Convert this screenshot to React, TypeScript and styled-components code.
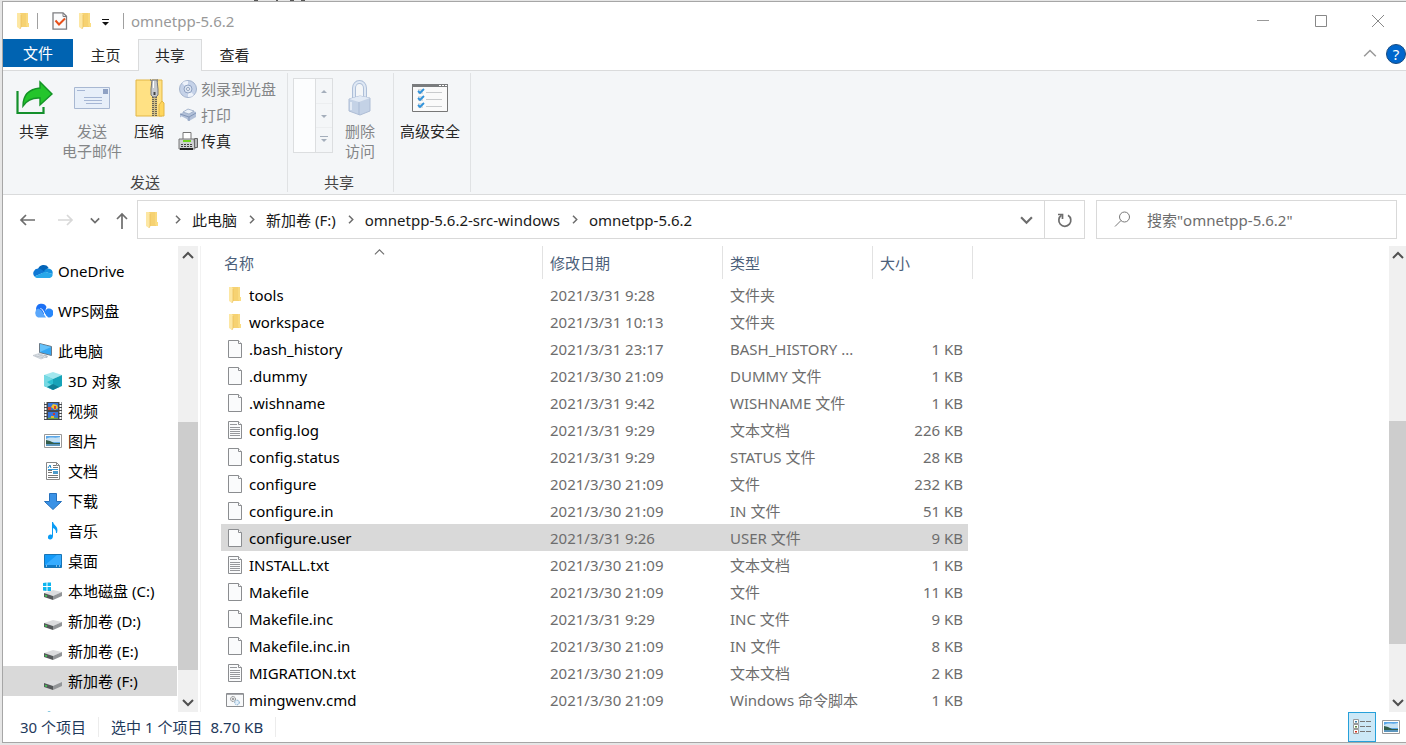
import React from "react";
import styled, { createGlobalStyle } from "styled-components";

const GlobalStyle = createGlobalStyle`
  *, *::before, *::after { box-sizing: border-box; }
  body {
    margin: 0;
    background: #e6e6e6;
    color: #000;
    font-family: "Noto Sans", "Noto Sans CJK SC", sans-serif;
    font-size: 15px;
    line-height: 20px;
    overflow: hidden;
  }
  button, input {
    font: inherit;
    color: inherit;
    border: 0;
    padding: 0;
    margin: 0;
    background: none;
  }
  svg { display: block; flex: none; }
`;

/* ---------- window frame ---------- */

const Desktop = styled.div`
  height: 100vh;
  display: flex;
  flex-direction: column;
  padding: 0 0 2px 2px;
`;

const Window = styled.div`
  flex: 1;
  min-height: 0;
  display: flex;
  flex-direction: column;
  background: #fff;
  border: 1px solid #a6a6a6;
  border-right: 0;
`;

const TitleBar = styled.header`
  height: 37px;
  flex: none;
  display: flex;
  align-items: center;
  padding-left: 11px;
  color: #999;
`;

const QuickButton = styled.button<{ $gap: number }>`
  margin-right: ${(p) => p.$gap}px;
`;

const TitleDivider = styled.span<{ $gap: number }>`
  width: 1px;
  height: 16px;
  background: #a0a0a0;
  margin-right: ${(p) => p.$gap}px;
`;

const WindowTitle = styled.h1`
  flex: 1;
  margin: 0;
  font-size: 15px;
  font-weight: 400;
`;

const CaptionButton = styled.button`
  width: 58px;
  height: 36px;
  display: grid;
  place-items: center;
  &:last-child { width: 56px; }
`;

const TabBar = styled.nav`
  height: 32px;
  flex: none;
  display: flex;
  align-items: flex-start;
  border-bottom: 1px solid #dadbdc;
`;

const FileTab = styled.button`
  width: 70px;
  height: 28px;
  color: #fff;
  background: #0063b1;
`;

const Tab = styled.button<{ $active?: boolean }>`
  width: ${(p) => (p.$active ? 64 : 65)}px;
  height: 32px;
  padding-bottom: 2px;
  color: #262626;
  border: solid ${(p) => (p.$active ? "#dadbdc" : "transparent")};
  border-width: 1px 1px 0;
  background: ${(p) => (p.$active ? "#f4f6f8" : "transparent")};
`;

const TabTools = styled.div`
  margin-left: auto;
  height: 30px;
  display: flex;
  align-items: center;
  gap: 9px;
`;

const HelpButton = styled.button`
  width: 20px;
  height: 20px;
  border-radius: 50%;
  background: #0066cc;
  border: 1px solid #174a80;
  color: #fff;
  line-height: 18px;
`;

/* ---------- ribbon ---------- */

const Ribbon = styled.section`
  height: 124px;
  flex: none;
  display: flex;
  padding: 2px 0;
  background: #f4f6f8;
  border-bottom: 1px solid #dadbdc;
`;

const RibbonGroup = styled.div<{ $width: number; $pad: number }>`
  width: ${(p) => p.$width}px;
  padding: 5px 0 0 ${(p) => p.$pad}px;
  display: flex;
  flex-direction: column;
  justify-content: space-between;
  border-right: 1px solid #e0e2e4;
`;

const GroupItems = styled.div`
  display: flex;
  align-items: flex-start;
`;

const GroupCaption = styled.div<{ $pad: number }>`
  padding-right: ${(p) => p.$pad}px;
  text-align: center;
  color: #444;
`;

const LargeButton = styled.button<{ $width: number }>`
  width: ${(p) => p.$width}px;
  display: flex;
  flex-direction: column;
  align-items: center;
  gap: 3px;
  color: #262626;
  white-space: nowrap;
  &:disabled { color: #848688; }
`;

const IconSlot = styled.span`
  height: 40px;
  display: grid;
  place-items: center;
`;

const SmallButtons = styled.div`
  display: flex;
  flex-direction: column;
  padding-left: 2px;
`;

const SmallButton = styled.button`
  height: 26px;
  padding-bottom: 5px;
  display: flex;
  align-items: center;
  gap: 3px;
  color: #262626;
  &:disabled { color: #848688; }
`;

const Gallery = styled.div`
  width: 40px;
  height: 75px;
  margin-right: 2px;
  display: flex;
  border: 1px solid #dcdee0;
  background: #fcfdfe;
`;

const GalleryKeys = styled.div`
  width: 17px;
  margin-left: auto;
  display: flex;
  flex-direction: column;
  border-left: 1px solid #dcdee0;
  background: #f4f6f8;
`;

const GalleryKey = styled.button`
  flex: 1;
  display: grid;
  place-items: center;
  & + & { border-top: 1px solid #eceef0; }
`;

/* ---------- address row ---------- */

const NavRow = styled.nav`
  height: 51px;
  flex: none;
  display: flex;
  padding: 5px 9px 7px 0;
`;

const NavButtons = styled.div`
  width: 134px;
  display: flex;
  align-items: center;
  padding-left: 16px;
`;

const NavButton = styled.button<{ $gap: number }>`
  margin-right: ${(p) => p.$gap}px;
`;

const AddressBar = styled.div`
  flex: 1;
  min-width: 0;
  display: flex;
  align-items: center;
  padding-left: 5px;
  border: 1px solid #d9d9d9;
`;

const Crumbs = styled.div`
  flex: 1;
  min-width: 0;
  display: flex;
  align-items: center;
  gap: 10px;
  padding-left: 12px;
  white-space: nowrap;
`;

const Crumb = styled.a`
  color: #1a1a1a;
  text-decoration: none;
`;

const RefreshButton = styled.button`
  width: 40px;
  align-self: stretch;
  margin-left: 11px;
  display: grid;
  place-items: center;
  border-left: 1px solid #d9d9d9;
`;

const SearchBox = styled.label`
  width: 301px;
  margin-left: 11px;
  display: flex;
  align-items: center;
  gap: 16px;
  padding-left: 17px;
  border: 1px solid #d9d9d9;
`;

const SearchInput = styled.input`
  flex: 1;
  min-width: 0;
  outline: 0;
  &::placeholder { color: #6d6d6d; opacity: 1; }
`;

/* ---------- body ---------- */

const Body = styled.div`
  flex: 1;
  min-height: 0;
  display: flex;
`;

const Sidebar = styled.aside`
  width: 174px;
  flex: none;
  overflow: hidden;
  padding-top: 10px;
`;

const Place = styled.a<{ $level: number; $selected?: boolean }>`
  height: 30px;
  display: flex;
  align-items: center;
  gap: 5px;
  padding-left: ${(p) => (p.$level ? 40 : 30)}px;
  margin-bottom: ${(p) => (p.$level ? 0 : 10)}px;
  background: ${(p) => (p.$selected ? "#d9d9d9" : "transparent")};
  color: #000;
  text-decoration: none;
  white-space: nowrap;
  &:nth-of-type(3) { margin-bottom: 0; }
  &:last-of-type { margin-top: 10px; }
`;

const Scrollbar = styled.div<{ $width: number; $start: number }>`
  width: ${(p) => p.$width}px;
  flex: none;
  margin-left: ${(p) => p.$start}px;
  display: flex;
  flex-direction: column;
  background: #f0f0f0;
`;

const ScrollButton = styled.button`
  height: 20px;
  flex: none;
  display: grid;
  place-items: center;
`;

const ScrollPart = styled.div<{ $share: number; $thumb?: boolean }>`
  flex: ${(p) => p.$share} 1 0;
  background: ${(p) => (p.$thumb ? "#cdcdcd" : "transparent")};
`;

const FileArea = styled.main`
  flex: 1;
  min-width: 0;
  overflow: hidden;
  margin-left: 2px;
  padding-left: 20px;
  border-left: 1px solid #f2f2f2;
`;

const FileTable = styled.table`
  width: 752px;
  table-layout: fixed;
  border-collapse: collapse;
`;

const HeadCell = styled.th<{ $width: number; $pad: number }>`
  position: relative;
  width: ${(p) => p.$width}px;
  height: 35px;
  padding: 0 0 2px;
  text-align: left;
  vertical-align: top;
  font-weight: 400;
  color: #4c607a;
  & > button {
    width: 100%;
    height: 33px;
    padding-left: ${(p) => p.$pad}px;
    text-align: left;
    border-right: 1px solid #e2e2e2;
  }
`;

const SortMark = styled.span`
  position: absolute;
  top: 1px;
  left: 0;
  right: 5px;
  display: grid;
  place-items: center;
`;

const FileRow = styled.tr<{ $selected: boolean }>`
  height: 27px;
  background: ${(p) =>
    p.$selected ? "linear-gradient(to right, #d9d9d9 747px, transparent 747px)" : "none"};
`;

const Cell = styled.td<{ $right?: boolean }>`
  height: 27px;
  padding: 0 ${(p) => (p.$right ? 10 : 8)}px 0 7px;
  color: #6d6d6d;
  text-align: ${(p) => (p.$right ? "right" : "left")};
  white-space: nowrap;
  overflow: hidden;
  text-overflow: ellipsis;
`;

const FileName = styled.span`
  display: flex;
  align-items: center;
  gap: 5px;
  color: #000;
  svg { margin-left: -2px; }
`;

/* ---------- status bar ---------- */

const StatusBar = styled.footer`
  height: 30px;
  flex: none;
  display: flex;
  align-items: center;
  padding-left: 17px;
  color: #1e395b;
  white-space: nowrap;
`;

const StatusText = styled.span<{ $gap: number; $divider?: boolean }>`
  padding-right: ${(p) => p.$gap}px;
  margin-right: ${(p) => (p.$divider ? 12 : 0)}px;
  border-right: ${(p) => (p.$divider ? "1px solid #ececec" : "0")};
`;

const ViewButtons = styled.div`
  margin-left: auto;
  display: flex;
  height: 30px;
`;

const ViewButton = styled.button<{ $active?: boolean }>`
  width: ${(p) => (p.$active ? 28 : 30)}px;
  display: grid;
  place-items: center;
  border: 1px solid ${(p) => (p.$active ? "#26a0da" : "transparent")};
  background: ${(p) => (p.$active ? "#cce8f7" : "transparent")};
`;

/* ---------- icons ---------- */

type ChevronProps = { dir: "up" | "down" | "right"; w?: number; color?: string; stroke?: number };

const Chevron = ({ dir, w = 10, color = "#6d6d6d", stroke = 2 }: ChevronProps) => {
  const d = { up: "M1 8 L6 3 L11 8", down: "M1 4 L6 9 L11 4", right: "M4 1 L9 6 L4 11" }[dir];
  return (
    <svg width={w} height={w} viewBox="0 0 12 12" fill="none" stroke={color} strokeWidth={stroke}>
      <path d={d} />
    </svg>
  );
};

const FolderIcon = () => (
  <svg width="18" height="18" viewBox="0 0 18 18">
    <path d="M5 1h9v13h1v1H5z" fill="#f6d272" />
    <path d="M12 1h2v13h-2z" fill="#f9da80" />
    <path d="M3 1h3l1 2v12l-1 2-3-2z" fill="#fde7a3" />
    <path d="M7 3v12l-1 2" fill="none" stroke="#e9bd54" strokeWidth=".7" />
    <path d="M13 11h2v4h-2z" fill="#fbdd82" />
  </svg>
);

const FileIcon = ({ lines = false }: { lines?: boolean }) => (
  <svg width="18" height="20" viewBox="0 0 18 20">
    <path d="M2.5 1.5h10l3 3v14h-13z" fill="#fafbfc" stroke="#8b8d90" />
    <path d="M12.500 1.500v3h3" fill="#fff" stroke="#8b8d90" />
    {lines && (
      <path d="M4 4.500h7M4 7.500h10M4 9.500h10M4 11.500h10M4 13.500h10M4 15.500h10" stroke="#96989c" fill="none" />
    )}
  </svg>
);

const ScriptIcon = () => (
  <svg width="18" height="16" viewBox="0 0 18 16">
    <path d="M.5 1.500h17v13H.5z" fill="#f8f9fa" stroke="#8b8d90" />
    <path d="M1 2h16" stroke="#8b8d90" strokeWidth="1.500" />
    <circle cx="7" cy="7" r="2.500" fill="#e6e8ea" stroke="#777" strokeDasharray="1.200 .8" />
    <circle cx="7" cy="7" r="1" fill="#888" />
    <circle cx="11" cy="10.500" r="2.300" fill="#e2effa" stroke="#6d9fc6" strokeDasharray="1.200 .8" />
  </svg>
);

const CheckDocIcon = () => (
  <svg width="16" height="18" viewBox="0 0 16 18">
    <path d="M1 .8h10l3.500 3.500v12.900H1z" fill="#fbfbfc" stroke="#7d7d80" strokeWidth="1.300" />
    <path d="M11 1v3.500h3.500" fill="none" stroke="#7d7d80" />
    <path d="M3.500 8.500l3.500 4 6-6" fill="none" stroke="#e8501a" strokeWidth="2" />
  </svg>
);

const ShareIcon = () => (
  <svg width="38" height="36" viewBox="0 0 38 36">
    <path d="M2.500 11v22h26v-6" fill="none" stroke="#14902c" strokeWidth="2.200" />
    <path d="M8 26C8 14 14 9 25 8V2l12 12-12 11v-7c-8-.5-13 2-17 8z" fill="#24c52c" stroke="#149327" strokeWidth="1.400" />
  </svg>
);

const MailIcon = () => (
  <svg width="36" height="24" viewBox="0 0 36 24">
    <path d="M.5 1.500h35v21H.5z" fill="#e7eff9" stroke="#a8b8d2" />
    <path d="M29 3h5v5h-5z" fill="#8fa2c4" />
    <path d="M3 4.500h8M10 11.500h18M10 14.500h18M12 17.500h16" stroke="#a5b6d4" />
  </svg>
);

const ZipIcon = () => (
  <svg width="32" height="38" viewBox="0 0 32 38">
    <path d="M3 1h26v36H3z" fill="#ffe184" stroke="#e2b644" />
    <path d="M29 22l2 2v13h-5V26z" fill="#ffd65c" stroke="#e2b644" />
    <path d="M19 2h5v35h-5z" fill="#d4c082" />
    <path d="M20 14v23M23 14v23" stroke="#6a6454" strokeWidth="2" strokeDasharray="1 1" />
    <path d="M17 1h2v8M25 1h-1v8" fill="none" stroke="#9b9582" strokeWidth="2" strokeDasharray="1 1" />
    <path d="M19 1h5l1 9v6l-2 2h-3l-2-2v-6z" fill="#c6c9cd" stroke="#77797c" />
    <path d="M20.500 13h2v3h-2z" fill="#444" />
    <path d="M20.500 2v7" stroke="#fff" />
  </svg>
);

const DiscIcon = () => (
  <svg width="20" height="20" viewBox="0 0 20 20">
    <circle cx="10" cy="10" r="8.500" fill="#c5d2e8" stroke="#a3b3cd" />
    <path d="M10 10L4 4a8 8 0 0 1 6-2zM10 10l6 6a8 8 0 0 1-6 2z" fill="#edf2fa" />
    <circle cx="10" cy="10" r="4" fill="#dce5f2" stroke="#8fa2c2" />
    <circle cx="10" cy="10" r="1.500" fill="#fff" stroke="#91a2be" />
  </svg>
);

const PrinterIcon = () => (
  <svg width="20" height="20" viewBox="0 0 20 20">
    <path d="M2 9l8-5 8 3v5l-7 4-9-4z" fill="#b2c0d8" />
    <path d="M5 7l5-3 6 2-5 3z" fill="#edf2f9" stroke="#91a3c0" strokeWidth=".7" />
    <path d="M2 9l9 3 7-4M11 12v4" fill="none" stroke="#8195b7" />
    <path d="M3 12l6 3" stroke="#f4f7fb" strokeWidth="1.500" />
  </svg>
);

const FaxIcon = () => (
  <svg width="20" height="20" viewBox="0 0 20 20">
    <path d="M5 1.500h8v7H5z" fill="#fff" stroke="#777" />
    <path d="M1 8h15l1 10H1z" fill="#cfd1d2" stroke="#777" />
    <path d="M16.500 7.500h3v9h-3z" fill="#b7b9bb" stroke="#666" />
    <path d="M5 9h8v2H5z" fill="#72d322" />
    <path d="M3 13.500h12M3 15.500h12" stroke="#444" strokeDasharray="2 1" />
    <path d="M2 18h13" stroke="#222" strokeWidth="2" />
  </svg>
);

const LockIcon = () => (
  <svg width="26" height="38" viewBox="0 0 26 38">
    <path d="M7 20V9a5.500 6 0 0 1 11 0v11" fill="none" stroke="#aebfd8" strokeWidth="4" />
    <path d="M7 20V9a5.500 6 0 0 1 11 0v11" fill="none" stroke="#dfe8f4" strokeWidth="2" />
    <path d="M2 20l11-3 10 2v13l-10 4-11-4z" fill="#c4d2e6" stroke="#aebdd5" />
    <path d="M2 20l10 3 11-4-10-2z" fill="#e2eaf5" />
    <path d="M12 23v13" stroke="#a9bad4" />
    <path d="M4 23v8" stroke="#e4ebf5" strokeWidth="2" />
  </svg>
);

const SecurityIcon = () => (
  <svg width="36" height="28" viewBox="0 0 36 28">
    <path d="M.5.5h35v27H.5z" fill="#fafafa" stroke="#777" />
    <path d="M0 0h36v3H0z" fill="#7a7c7e" />
    <path d="M27 1.500h2M30 1.500h2M33 1.500h2" stroke="#fff" />
    <path d="M6 5h5v5H6zM6 12h5v5H6zM6 19h5v5H6z" fill="#d9dde0" />
    <path d="M6 7l2 2 4-4M6 14l2 2 4-4M6 21l2 2 4-4" fill="none" stroke="#2f93dc" strokeWidth="1.800" />
    <path d="M14 8.500h16M14 15.500h16M14 22.500h16" stroke="#c9cbcd" />
  </svg>
);

const Triangle = ({ up = false, bar = false }: { up?: boolean; bar?: boolean }) => (
  <svg width="8" height="10" viewBox="0 0 8 10" fill="#a4aebb">
    {bar && <path d="M0 1h8v1H0z" />}
    <path d={up ? "M1 7h6L4 4z" : "M1 4h6L4 7z"} />
  </svg>
);

const Arrow = ({ dir, color }: { dir: "left" | "right" | "up"; color: string }) => {
  const d = {
    left: "M16 8H2M7 3L2 8l5 5",
    right: "M0 8h14M9 3l5 5-5 5",
    up: "M8 17V2M3 7l5-5 5 5",
  }[dir];
  return (
    <svg width="16" height="18" viewBox="0 -1 16 18" fill="none" stroke={color} strokeWidth="1.700">
      <path d={d} />
    </svg>
  );
};

const RefreshIcon = () => (
  <svg width="16" height="18" viewBox="0 0 16 18" fill="none" stroke="#6d6d6d" strokeWidth="1.700">
    <path d="M11 4.200a6 6 0 1 1-6.500.1" />
    <path d="M1 3.500h4.500V8" />
  </svg>
);

const SearchIcon = () => (
  <svg width="17" height="17" viewBox="0 0 17 17" fill="none" stroke="#787878">
    <circle cx="10.500" cy="6" r="5" />
    <path d="M7 9.500l-6 6" />
  </svg>
);

const OneDriveIcon = () => (
  <svg width="20" height="20" viewBox="0 0 20 20">
    <path d="M5 8a6 6 0 0 1 10.500-1.500L11 12 5 8z" fill="#0364b8" />
    <path d="M5 7.500a4.800 4.800 0 0 0-3.500 8L12 11 8 8.300A5 5 0 0 0 5 7.500z" fill="#0f78d4" />
    <path d="M15 7.500A4.300 4.300 0 0 1 19.500 13L12 11l-1-.8c1-1.700 2.500-2.700 4-2.700z" fill="#1490df" />
    <path d="M1.500 15.500C2.500 16.600 3.500 17 5 17h11c2 0 4-1.600 3.500-4L12 10.700z" fill="#28a8ea" />
  </svg>
);

const WpsIcon = () => (
  <svg width="20" height="20" viewBox="0 0 20 20">
    <path d="M3 8a5.500 5.500 0 0 1 10.500-2L11 13H5z" fill="#1b70f5" />
    <path d="M5 7.500a5 5 0 0 0 0 9h8L8 9z" fill="#5aa7fb" />
    <path d="M9 8c2 1 3.500 8.500 7 8.500a4.500 4.500 0 0 0 0-9c-3 0-3 2-4.500 3z" fill="#2787fa" />
    <path d="M7.500 7.500c3 0 4 8 7 8.500" fill="none" stroke="#fff" />
  </svg>
);

const ComputerIcon = () => (
  <svg width="20" height="20" viewBox="0 0 20 20">
    <path d="M6.500 2.500l12 3v9l-12-3z" fill="#35a7f3" stroke="#6b7885" />
    <path d="M7 3l11 3-11 5z" fill="#66c2fa" />
    <path d="M11 13.500l4 1.500-1 2-4-1z" fill="#b4bcc4" />
    <path d="M0 14.500l6-2 8 3-6 2.500z" fill="#dfe4e9" stroke="#b3bcc4" strokeWidth=".6" />
    <path d="M2 14.700l8 2M5 13.500l6 2" stroke="#a9b2ba" strokeWidth=".6" />
  </svg>
);

const CubeIcon = () => (
  <svg width="20" height="20" viewBox="0 0 20 20">
    <path d="M1 4l9-3 9 3-9 4z" fill="#a3e7ee" />
    <path d="M1 4l9 4v11l-9-4z" fill="#2bc0d1" />
    <path d="M19 4l-9 4v11l9-4z" fill="#16a3b8" />
    <path d="M1 4l9 4-6 3 6 4v4l-9-4z" fill="#75d9e3" />
    <path d="M4 16l6-3 6 3-6 3z" fill="#0e7f96" />
  </svg>
);

const VideoIcon = () => (
  <svg width="20" height="20" viewBox="0 0 20 20">
    <path d="M1 1h18v18H1z" fill="#44484c" />
    <path d="M2.500 1v18M17.500 1v18" stroke="#fff" strokeWidth="2" strokeDasharray="2 1" />
    <path d="M5 2h10v7H5zM5 11h10v7H5z" fill="#3576dc" />
    <path d="M8 6l2-3 4 1 1 3-3 2z" fill="#edc531" />
    <path d="M5 6h3v3H5zM11 5h2v3h-2z" fill="#d24332" />
    <path d="M5 17l4-1 6 1v1H5z" fill="#68a63e" />
    <path d="M8 15h3v2H8z" fill="#e4b52d" />
    <path d="M10 12h2v2h-2z" fill="#c53e30" />
  </svg>
);

const PictureIcon = () => (
  <svg width="20" height="16" viewBox="0 0 20 16">
    <path d="M1.500 1.500h17v13h-17z" fill="#fff" stroke="#999" />
    <path d="M3 3h14v10H3z" fill="#5aa7e8" />
    <path d="M3 6c5-3 8 0 14-2v5H3z" fill="#c7e2f4" />
    <path d="M3 7l4 1 4 2h6v1H3z" fill="#335d4b" />
    <path d="M3 11h14v2H3z" fill="#5c96bd" />
  </svg>
);

const DocumentIcon = () => (
  <svg width="20" height="20" viewBox="0 0 20 20">
    <path d="M3.500 1.500h10l3 3v14h-13z" fill="#fff" stroke="#888" />
    <path d="M13.500 1.500v3h3" fill="none" stroke="#888" />
    <path d="M5 7l2-3 1 3" fill="none" stroke="#1683c9" />
    <path d="M10 4.500h3M10 6.500h5M5 9.500h4M5 11.500h4M5 14.500h10M5 16.500h10" stroke="#777" />
    <path d="M5 8.500h10" stroke="#2b9be0" />
    <path d="M10 10h5v3h-5z" fill="#4b9aca" />
  </svg>
);

const DownloadIcon = () => (
  <svg width="20" height="20" viewBox="0 0 20 20">
    <path d="M6.500 2.500h7v8h5l-8.500 8-8.500-8h5z" fill="#3a92e6" stroke="#2671bd" />
  </svg>
);

const MusicIcon = () => (
  <svg width="20" height="20" viewBox="0 0 20 20">
    <path d="M9 1h1c1 4 6 4 4 11h-1c0-3-1-4-3-5v8c0 5-6 4-5 1 0-2 2-3 4-2z" fill="#0a9cf5" />
  </svg>
);

const DesktopIcon = () => (
  <svg width="20" height="16" viewBox="0 0 20 16">
    <path d="M1.500 1.500h17v13h-17z" fill="#149af8" stroke="#1875b6" />
    <path d="M2 12L14 2h4v10z" fill="#37acff" />
    <path d="M2 13h16" stroke="#0a5a96" />
    <path d="M3 13h1M13 13h1M16 13h1" stroke="#fff" />
  </svg>
);

const DriveIcon = ({ system = false }: { system?: boolean }) => (
  <svg width="20" height="20" viewBox="0 0 20 20">
    <path d="M1 12l9-3 9 2-9 4z" fill="#dcdddf" />
    <path d="M1 12l9 3v4l-9-3z" fill="#55585a" />
    <path d="M10 15l9-4v4l-9 4z" fill="#929598" />
    <path d="M2 14.500l2 .7" stroke="#42cf55" strokeWidth="1.500" />
    {system && <path d="M0 2l3.500-.5V5H0zM4.500 1.500H8V5H4.500zM0 6h3.500v4L0 9.500zM4.500 6H8v4H4.500z" fill="#0db6ef" />}
  </svg>
);

const NetworkIcon = () => (
  <svg width="20" height="20" viewBox="0 0 20 20">
    <path d="M1 3l5-3 6 3v9H1z" fill="#62b7d6" />
    <path d="M7 6h12v9H7z" fill="#35a7f3" stroke="#6b7885" />
  </svg>
);

const DetailsIcon = () => (
  <svg width="18" height="16" viewBox="0 0 18 16">
    <path d="M.5.5h5v4h-5zM.5 5.500h5v4h-5zM.5 10.500h5v4h-5z" fill="#fff" stroke="#999" />
    <path d="M2 2h2v1.500H2z" fill="#3c7fa8" />
    <path d="M2 7h2v1.500H2z" fill="#58863b" />
    <path d="M2 12h2v1.500H2z" fill="#d2321f" />
    <path d="M7 2.500h5M13 2.500h5M7 7.500h5M13 7.500h5M7 12.500h5M13 12.500h5" stroke="#777" />
  </svg>
);

/* ---------- data ---------- */

const places = [
  { label: "OneDrive", icon: <OneDriveIcon />, level: 0 },
  { label: "WPS网盘", icon: <WpsIcon />, level: 0 },
  { label: "此电脑", icon: <ComputerIcon />, level: 0 },
  { label: "3D 对象", icon: <CubeIcon />, level: 1 },
  { label: "视频", icon: <VideoIcon />, level: 1 },
  { label: "图片", icon: <PictureIcon />, level: 1 },
  { label: "文档", icon: <DocumentIcon />, level: 1 },
  { label: "下载", icon: <DownloadIcon />, level: 1 },
  { label: "音乐", icon: <MusicIcon />, level: 1 },
  { label: "桌面", icon: <DesktopIcon />, level: 1 },
  { label: "本地磁盘 (C:)", icon: <DriveIcon system />, level: 1 },
  { label: "新加卷 (D:)", icon: <DriveIcon />, level: 1 },
  { label: "新加卷 (E:)", icon: <DriveIcon />, level: 1 },
  { label: "新加卷 (F:)", icon: <DriveIcon />, level: 1, selected: true },
];

type Kind = "folder" | "file" | "text" | "script";

const files: { name: string; date: string; type: string; size: string; kind: Kind }[] = [
  { name: "tools", date: "2021/3/31 9:28", type: "文件夹", size: "", kind: "folder" },
  { name: "workspace", date: "2021/3/31 10:13", type: "文件夹", size: "", kind: "folder" },
  { name: ".bash_history", date: "2021/3/31 23:17", type: "BASH_HISTORY ...", size: "1 KB", kind: "file" },
  { name: ".dummy", date: "2021/3/30 21:09", type: "DUMMY 文件", size: "1 KB", kind: "file" },
  { name: ".wishname", date: "2021/3/31 9:42", type: "WISHNAME 文件", size: "1 KB", kind: "file" },
  { name: "config.log", date: "2021/3/31 9:29", type: "文本文档", size: "226 KB", kind: "text" },
  { name: "config.status", date: "2021/3/31 9:29", type: "STATUS 文件", size: "28 KB", kind: "file" },
  { name: "configure", date: "2021/3/30 21:09", type: "文件", size: "232 KB", kind: "file" },
  { name: "configure.in", date: "2021/3/30 21:09", type: "IN 文件", size: "51 KB", kind: "file" },
  { name: "configure.user", date: "2021/3/31 9:26", type: "USER 文件", size: "9 KB", kind: "file" },
  { name: "INSTALL.txt", date: "2021/3/30 21:09", type: "文本文档", size: "1 KB", kind: "text" },
  { name: "Makefile", date: "2021/3/30 21:09", type: "文件", size: "11 KB", kind: "file" },
  { name: "Makefile.inc", date: "2021/3/31 9:29", type: "INC 文件", size: "9 KB", kind: "file" },
  { name: "Makefile.inc.in", date: "2021/3/30 21:09", type: "IN 文件", size: "8 KB", kind: "file" },
  { name: "MIGRATION.txt", date: "2021/3/30 21:09", type: "文本文档", size: "2 KB", kind: "text" },
  { name: "mingwenv.cmd", date: "2021/3/30 21:09", type: "Windows 命令脚本", size: "1 KB", kind: "script" },
];

const kindIcons: Record<Kind, React.ReactNode> = {
  folder: <FolderIcon />,
  file: <FileIcon />,
  text: <FileIcon lines />,
  script: <ScriptIcon />,
};

const crumbs = ["此电脑", "新加卷 (F:)", "omnetpp-5.6.2-src-windows", "omnetpp-5.6.2"];

const VerticalScroll = ({ width, start, parts }: { width: number; start: number; parts: number[] }) => (
  <Scrollbar $width={width} $start={start}>
    <ScrollButton aria-label="向上滚动">
      <Chevron dir="up" w={12} color="#505050" />
    </ScrollButton>
    <ScrollPart $share={parts[0]} />
    <ScrollPart $share={parts[1]} $thumb />
    <ScrollPart $share={parts[2]} />
    <ScrollButton aria-label="向下滚动">
      <Chevron dir="down" w={12} color="#505050" />
    </ScrollButton>
  </Scrollbar>
);

export default function App() {
  return (
    <Desktop>
      <GlobalStyle />
      <svg width="310" height="1" viewBox="0 0 310 1" aria-hidden="true">
        <path d="M252 .5h4M274 .5h2M288 .5h4M299 .5h4" stroke="#555" />
      </svg>
      <Window>
        <TitleBar>
          <QuickButton $gap={5} aria-label="窗口菜单"><FolderIcon /></QuickButton>
          <TitleDivider $gap={14} />
          <QuickButton $gap={8} aria-label="属性"><CheckDocIcon /></QuickButton>
          <QuickButton $gap={8} aria-label="新建文件夹"><FolderIcon /></QuickButton>
          <QuickButton $gap={13} aria-label="自定义快速访问工具栏">
            <svg width="8" height="10" viewBox="0 0 8 10">
              <path d="M0 3h7v1H0zM0 6h7L3.500 9.500z" fill="#111" />
            </svg>
          </QuickButton>
          <TitleDivider $gap={7} />
          <WindowTitle>omnetpp-5.6.2</WindowTitle>
          <CaptionButton aria-label="最小化">
            <svg width="12" height="12" viewBox="0 0 12 12"><path d="M0 5.500h12" stroke="#999" /></svg>
          </CaptionButton>
          <CaptionButton aria-label="最大化">
            <svg width="12" height="12" viewBox="0 0 12 12"><path d="M.5.5h11v11H.5z" fill="none" stroke="#888" /></svg>
          </CaptionButton>
          <CaptionButton aria-label="关闭">
            <svg width="12" height="12" viewBox="0 0 12 12"><path d="M0 0l12 12M12 0L0 12" stroke="#888" /></svg>
          </CaptionButton>
        </TitleBar>

        <TabBar>
          <FileTab>文件</FileTab>
          <Tab>主页</Tab>
          <Tab $active>共享</Tab>
          <Tab>查看</Tab>
          <TabTools>
            <button aria-label="最小化功能区">
              <Chevron dir="up" w={14} color="#999" stroke={1.3} />
            </button>
            <HelpButton aria-label="帮助">?</HelpButton>
          </TabTools>
        </TabBar>

        <Ribbon>
          <RibbonGroup $width={285} $pad={3}>
            <GroupItems>
              <LargeButton $width={56}>
                <IconSlot><ShareIcon /></IconSlot>
                共享
              </LargeButton>
              <LargeButton $width={60} disabled>
                <IconSlot><MailIcon /></IconSlot>
                <span>发送<br />电子邮件</span>
              </LargeButton>
              <LargeButton $width={54}>
                <IconSlot><ZipIcon /></IconSlot>
                压缩
              </LargeButton>
              <SmallButtons>
                <SmallButton disabled><DiscIcon />刻录到光盘</SmallButton>
                <SmallButton disabled><PrinterIcon />打印</SmallButton>
                <SmallButton><FaxIcon />传真</SmallButton>
              </SmallButtons>
            </GroupItems>
            <GroupCaption $pad={3}>发送</GroupCaption>
          </RibbonGroup>
          <RibbonGroup $width={106} $pad={5}>
            <GroupItems>
              <Gallery>
                <GalleryKeys>
                  <GalleryKey aria-label="上一行" disabled><Triangle up /></GalleryKey>
                  <GalleryKey aria-label="下一行" disabled><Triangle /></GalleryKey>
                  <GalleryKey aria-label="更多" disabled><Triangle bar /></GalleryKey>
                </GalleryKeys>
              </Gallery>
              <LargeButton $width={50} disabled>
                <IconSlot><LockIcon /></IconSlot>
                <span>删除<br />访问</span>
              </LargeButton>
            </GroupItems>
            <GroupCaption $pad={8}>共享</GroupCaption>
          </RibbonGroup>
          <RibbonGroup $width={77} $pad={0}>
            <GroupItems>
              <LargeButton $width={72}>
                <IconSlot><SecurityIcon /></IconSlot>
                高级安全
              </LargeButton>
            </GroupItems>
          </RibbonGroup>
        </Ribbon>

        <NavRow>
          <NavButtons>
            <NavButton $gap={23} aria-label="后退"><Arrow dir="left" color="#6d6d6d" /></NavButton>
            <NavButton $gap={16} aria-label="前进"><Arrow dir="right" color="#d8d8d8" /></NavButton>
            <NavButton $gap={14} aria-label="最近浏览的位置"><Chevron dir="down" /></NavButton>
            <NavButton $gap={0} aria-label="上移"><Arrow dir="up" color="#6d6d6d" /></NavButton>
          </NavButtons>
          <AddressBar>
            <FolderIcon />
            <Crumbs>
              {crumbs.map((c) => (
                <React.Fragment key={c}>
                  <Chevron dir="right" w={9} />
                  <Crumb href="#">{c}</Crumb>
                </React.Fragment>
              ))}
            </Crumbs>
            <button aria-label="以前的位置"><Chevron dir="down" w={13} /></button>
            <RefreshButton aria-label="刷新"><RefreshIcon /></RefreshButton>
          </AddressBar>
          <SearchBox>
            <SearchIcon />
            <SearchInput type="text" aria-label="搜索" placeholder={'搜索"omnetpp-5.6.2"'} />
          </SearchBox>
        </NavRow>

        <Body>
          <Sidebar>
            {places.map((p) => (
              <Place key={p.label} href="#" $level={p.level} $selected={p.selected}>
                {p.icon}
                {p.label}
              </Place>
            ))}
            <Place href="#" $level={1} aria-label="网络"><NetworkIcon /></Place>
          </Sidebar>
          <VerticalScroll width={20} start={1} parts={[156, 248, 22]} />
          <FileArea>
            <FileTable>
              <thead>
                <tr>
                  <HeadCell $width={322} $pad={3}>
                    <button>名称</button>
                    <SortMark><Chevron dir="up" w={11} stroke={1.2} /></SortMark>
                  </HeadCell>
                  <HeadCell $width={180} $pad={7}><button>修改日期</button></HeadCell>
                  <HeadCell $width={150} $pad={7}><button>类型</button></HeadCell>
                  <HeadCell $width={100} $pad={7}><button>大小</button></HeadCell>
                </tr>
              </thead>
              <tbody>
                {files.map((f) => (
                  <FileRow key={f.name} $selected={f.name === "configure.user"}>
                    <Cell><FileName>{kindIcons[f.kind]}{f.name}</FileName></Cell>
                    <Cell>{f.date}</Cell>
                    <Cell>{f.type}</Cell>
                    <Cell $right>{f.size}</Cell>
                  </FileRow>
                ))}
              </tbody>
            </FileTable>
          </FileArea>
          <VerticalScroll width={17} start={0} parts={[155, 223, 48]} />
        </Body>

        <StatusBar>
          <StatusText $gap={12} $divider>30 个项目</StatusText>
          <StatusText $gap={8}>选中 1 个项目</StatusText>
          <StatusText $gap={12} $divider>8.70 KB</StatusText>
          <ViewButtons>
            <ViewButton $active aria-label="详细信息"><DetailsIcon /></ViewButton>
            <ViewButton aria-label="大缩略图"><PictureIcon /></ViewButton>
          </ViewButtons>
        </StatusBar>
      </Window>
    </Desktop>
  );
}
